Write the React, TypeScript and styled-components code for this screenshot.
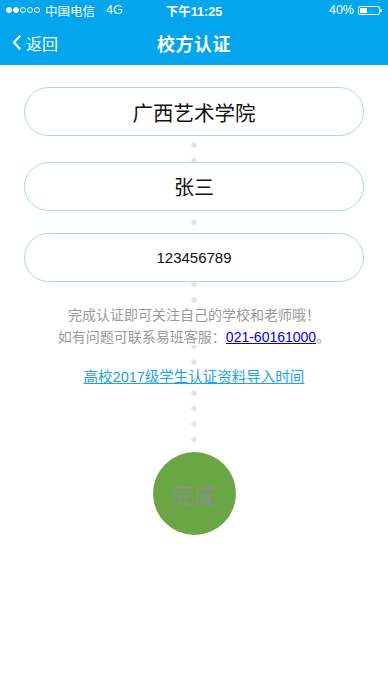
import React from 'react';
import styled, { createGlobalStyle } from 'styled-components';

const GlobalStyle = createGlobalStyle`
  html, body {
    margin: 0;
    padding: 0;
    background: #ffffff;
  }
  body {
    font-family: 'Liberation Sans', 'Noto Sans CJK SC', sans-serif;
  }
`;

const Page = styled.div`
  width: 388px;
  min-height: 691px;
  background: #ffffff;
`;

const Header = styled.div`
  background: #03a6ee;
  color: #ffffff;
`;

const StatusBar = styled.div`
  height: 20px;
  display: flex;
  align-items: center;
  justify-content: space-between;
  padding: 0 8px 0 6px;
  font-size: 12.5px;
  position: relative;
`;

const StatusLeft = styled.div`
  display: flex;
  align-items: center;
  gap: 5px;
`;

const Signal = styled.div`
  display: flex;
  gap: 1px;
`;

const SignalDot = styled.span<{ $on?: boolean }>`
  width: 6px;
  height: 6px;
  box-sizing: border-box;
  border-radius: 50%;
  border: 1px solid #ffffff;
  background: ${({ $on }) => ($on ? '#ffffff' : 'transparent')};
`;

const Carrier = styled.span`
  margin-right: 6px;
`;

const Time = styled.span`
  position: absolute;
  left: 0;
  right: 0;
  text-align: center;
  font-weight: bold;
  pointer-events: none;
`;

const StatusRight = styled.div`
  display: flex;
  align-items: center;
  gap: 4px;
`;

const Battery = styled.div`
  width: 22px;
  height: 9px;
  border: 1px solid #ffffff;
  border-radius: 2px;
  padding: 1px;
  box-sizing: border-box;
  position: relative;
  display: flex;

  &::after {
    content: '';
    position: absolute;
    right: -3px;
    top: 2px;
    width: 2px;
    height: 3px;
    background: #ffffff;
    border-radius: 0 1px 1px 0;
  }
`;

const BatteryLevel = styled.div`
  width: 40%;
  background: #ffffff;
`;

const NavBar = styled.div`
  height: 45px;
  display: grid;
  grid-template-columns: 1fr auto 1fr;
  align-items: center;
  padding: 0 12px;
`;

const Back = styled.div`
  display: flex;
  align-items: center;
  gap: 5px;
  font-size: 16px;
`;

const Title = styled.div`
  font-size: 18px;
  font-weight: bold;
  letter-spacing: 0.5px;
`;

/* dotted guide line runs down the middle, behind the fields */
const Track = styled.div`
  display: flex;
  flex-direction: column;
  padding: 22px 24px 0;
  background-image:
    linear-gradient(#ffffff, #ffffff),
    radial-gradient(circle, #e4e4e4 2.4px, rgba(228, 228, 228, 0) 3px);
  background-size: 100% 40px, 6px 15.5px;
  background-repeat: no-repeat, repeat-y;
  background-position: 0 0, 50% -5.25px;
`;

const Field = styled.div<{ $size: number; $gap?: number }>`
  height: 49px;
  box-sizing: border-box;
  border: 1px solid #a6d9f0;
  border-radius: 25px;
  background: #ffffff;
  display: flex;
  align-items: center;
  justify-content: center;
  font-size: ${({ $size }) => $size}px;
  color: #111111;
  margin-top: ${({ $gap }) => $gap ?? 0}px;
`;

const Info = styled.p`
  margin: 22px 0 0;
  text-align: center;
  font-size: 14px;
  line-height: 22px;
  color: #9a9a9a;
`;

const Line = styled.span`
  background: #ffffff;
`;

const Phone = styled.a`
  color: #0000ee;
  text-decoration: underline;
`;

const ImportLink = styled.a`
  align-self: center;
  margin-top: 18px;
  font-size: 14.5px;
  line-height: 22px;
  color: #1aa3e8;
  text-decoration: underline;
  background: #ffffff;
`;

const Done = styled.button`
  align-self: center;
  margin-top: 64px;
  width: 83px;
  height: 83px;
  border-radius: 50%;
  border: none;
  background: #6ba644;
  color: #8e8e8e;
  font-family: 'Liberation Sans', 'Noto Sans CJK SC', sans-serif;
  font-size: 22px;
  padding: 0;
`;

const App: React.FC = () => {
  return (
    <Page>
      <GlobalStyle />
      <Header>
        <StatusBar>
          <StatusLeft>
            <Signal>
              <SignalDot $on />
              <SignalDot $on />
              <SignalDot />
              <SignalDot />
              <SignalDot />
            </Signal>
            <Carrier>中国电信</Carrier>
            <span>4G</span>
          </StatusLeft>
          <Time>下午11:25</Time>
          <StatusRight>
            <span>40%</span>
            <Battery>
              <BatteryLevel />
            </Battery>
          </StatusRight>
        </StatusBar>
        <NavBar>
          <Back>
            <svg width="9" height="15" viewBox="0 0 9 15">
              <polyline
                points="7.5,1.5 2,7.5 7.5,13.5"
                fill="none"
                stroke="#ffffff"
                strokeWidth="2.2"
                strokeLinecap="square"
              />
            </svg>
            <span>返回</span>
          </Back>
          <Title>校方认证</Title>
          <div />
        </NavBar>
      </Header>

      <Track>
        <Field $size={20.5}>广西艺术学院</Field>
        <Field $size={20} $gap={26}>张三</Field>
        <Field $size={15} $gap={21.5}>123456789</Field>

        <Info>
          <Line>完成认证即可关注自己的学校和老师哦！</Line>
          <br />
          <Line>
            如有问题可联系易班客服：<Phone href="#">021-60161000</Phone>。
          </Line>
        </Info>

        <ImportLink href="#">高校2017级学生认证资料导入时间</ImportLink>

        <Done type="button">完成</Done>
      </Track>
    </Page>
  );
};

export default App;
